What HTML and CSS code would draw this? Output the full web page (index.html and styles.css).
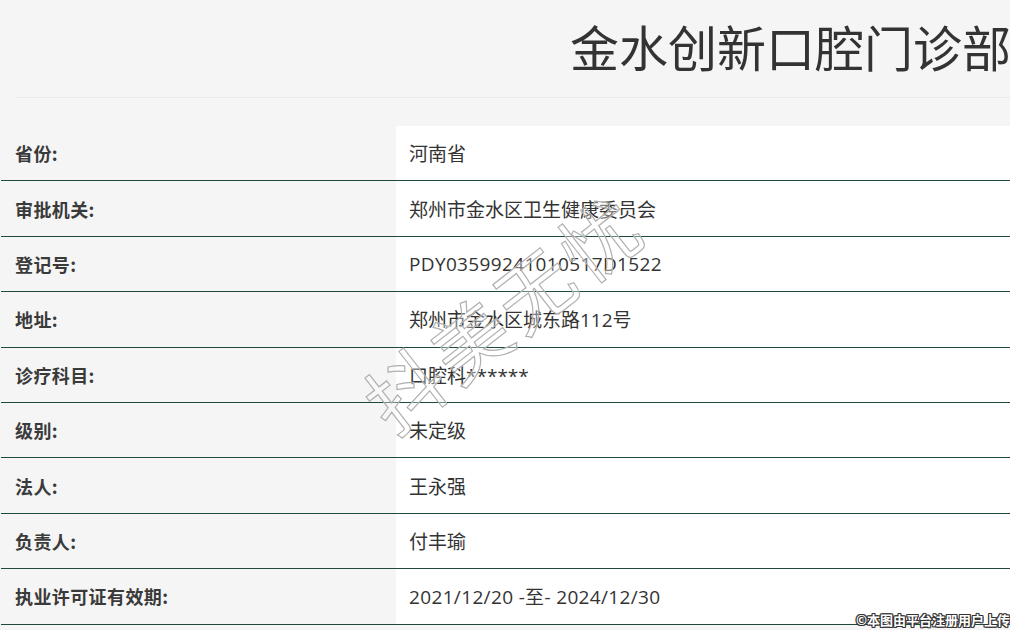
FILE: index.html
```html
<!DOCTYPE html>
<html lang="zh">
<head>
<meta charset="utf-8">
<title>金水创新口腔门诊部</title>
<link rel="stylesheet" href="styles.css">
</head>
<body>
<div class="page">
  <header class="head">
    <h1 class="title">金水创新口腔门诊部</h1>
  </header>
  <div class="info">
    <div class="row"><div class="label">省份:</div><div class="value">河南省</div></div>
    <div class="row"><div class="label">审批机关:</div><div class="value">郑州市金水区卫生健康委员会</div></div>
    <div class="row"><div class="label">登记号:</div><div class="value"><span class="num">PDY03599241010517D1522</span></div></div>
    <div class="row"><div class="label">地址:</div><div class="value">郑州市金水区城东路112号</div></div>
    <div class="row"><div class="label">诊疗科目:</div><div class="value">口腔科******</div></div>
    <div class="row"><div class="label">级别:</div><div class="value">未定级</div></div>
    <div class="row"><div class="label">法人:</div><div class="value">王永强</div></div>
    <div class="row"><div class="label">负责人:</div><div class="value">付丰瑜</div></div>
    <div class="row"><div class="label">执业许可证有效期:</div><div class="value"><span class="num">2021/12/20 -至- 2024/12/30</span></div></div>
  </div>
  <div class="watermark">抖美无忧</div>
  <div class="credit">©本图由平台注册用户上传</div>
</div>
</body>
</html>
```

FILE: styles.css
```css
html, body {
  margin: 0;
  padding: 0;
  background: #f5f5f5;
}
body {
  font-family: "Noto Sans CJK SC", "Noto Sans", sans-serif;
  color: #333;
  width: 1010px;
  height: 630px;
  overflow: hidden;
}
.page {
  position: relative;
  width: 1010px;
  height: 630px;
}
.head {
  margin-left: 16px;
  height: 97px;
  border-bottom: 1px solid #e9e9e9;
  display: flex;
  justify-content: flex-end;
}
.title {
  margin: 0;
  font-size: 49px;
  font-weight: 400;
  line-height: 91px;
  color: #333;
  white-space: nowrap;
  margin-right: -1px;
}
.info {
  margin-top: 28px;
  display: flex;
  flex-direction: column;
}
.row {
  display: flex;
  height: 54.4px;
  border-bottom: 1px solid #1d4a3b;
  margin-left: 1px;
}
.label {
  width: 381px;
  padding-left: 14px;
  display: flex;
  align-items: center;
  font-size: 18px;
  font-weight: 700;
  color: #3a3a3a;
  background: #f5f5f5;
  letter-spacing: 0.4px;
}
.value {
  flex: 1;
  background: #fff;
  padding-left: 13px;
  display: flex;
  align-items: center;
  font-family: "Open Sans", "Noto Sans CJK SC", sans-serif;
  font-size: 19px;
  color: #333;
}
.num {
  letter-spacing: 0.35px;
}
.watermark {
  position: absolute;
  left: 338px;
  top: 272px;
  font-size: 77px;
  line-height: 1;
  font-weight: 400;
  color: rgba(255,255,255,0.35);
  -webkit-text-stroke: 1.2px #b0b0b0;
  transform: rotate(-38deg);
  transform-origin: center;
  white-space: nowrap;
  letter-spacing: 5px;
  pointer-events: none;
}
.credit {
  position: absolute;
  right: 0;
  bottom: 2px;
  font-size: 13px;
  font-weight: 700;
  color: #fff;
  line-height: 16px;
  text-shadow: 1px 0 0 #333, -1px 0 0 #333, 0 1px 0 #333, 0 -1px 0 #333, 1px 1px 0 #333, -1px -1px 0 #333, 1px -1px 0 #333, -1px 1px 0 #333;
}
```
